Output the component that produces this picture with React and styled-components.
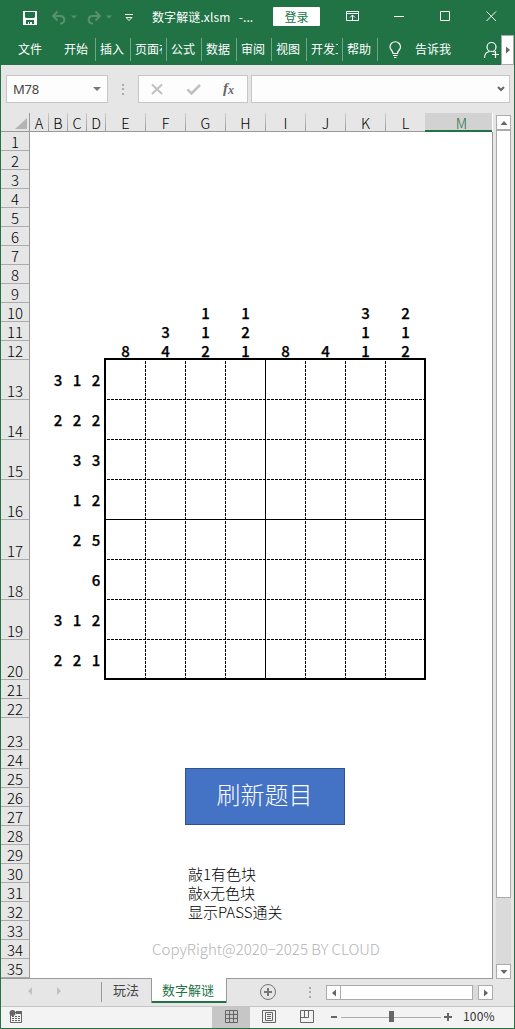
import React from 'react';
import styled, { createGlobalStyle, css } from 'styled-components';

const GREEN = '#217346';
const UI = '"Noto Sans CJK SC", sans-serif';

const GlobalStyle = createGlobalStyle`
  * { box-sizing: border-box; }
  body { margin: 0; background: #e6e6e6; }
`;

const Window = styled.div`
  width: 515px;
  height: 1029px;
  display: flex;
  flex-direction: column;
  overflow: hidden;
  background: #e6e6e6;
  border: solid ${GREEN};
  border-width: 0 1px 1px;
  font-family: ${UI};
  color: #262626;
`;

/* Title bar */
const TitleBar = styled.header`
  height: 33px;
  flex: none;
  display: flex;
  align-items: center;
  background: ${GREEN};
  color: #fff;
`;
const QuickAccess = styled.div`
  width: 151px;
  height: 33px;
  svg { display: block; }
`;
const Title = styled.div`
  width: 121px;
  font-size: 12px;
  line-height: 32px;
  white-space: pre;
  letter-spacing: 0.1px;
`;
const SignIn = styled.button`
  width: 47px;
  height: 19px;
  padding: 0;
  border: 0;
  border-radius: 1px;
  background: #fff;
  color: ${GREEN};
  font: 12px/18px ${UI};
`;
const WindowControls = styled.div`
  flex: 1;
  height: 33px;
  svg { display: block; }
`;

/* Ribbon tabs */
const Ribbon = styled.nav`
  height: 32px;
  flex: none;
  display: flex;
  align-items: flex-start;
  background: ${GREEN};
  color: #fff;
  font-size: 12px;
  line-height: 31px;
`;
const FileTab = styled.div`
  width: 59px;
  padding-left: 17px;
`;
const RibbonTab = styled.div`
  width: ${p => p.$w || 35}px;
  height: 23px;
  margin-top: 5px;
  padding-left: 4px;
  line-height: 21px;
  border-right: 1px solid #6fa687;
  display: flex;
`;
const TabLabel = styled.span`
  width: ${p => p.$w || 26}px;
  overflow: hidden;
  white-space: nowrap;
`;
const TellMe = styled.div`
  flex: 1;
  display: flex;
  svg { flex: none; margin: 8px 0 0 11px; }
  span { margin-left: 13px; }
`;
const ShareIcon = styled.svg`
  flex: none;
  margin-top: 7px;
`;
const RibbonScroll = styled.button`
  width: 13px;
  height: 30px;
  margin-top: 2px;
  padding: 0;
  border: 1px solid #ababab;
  background: #fff;
  display: grid;
  place-items: center;
`;

/* Formula bar */
const FormulaBar = styled.div`
  height: 48px;
  flex: none;
  display: flex;
  align-items: flex-start;
  padding: 10px 4px 0 5px;
`;
const FieldBox = styled.div`
  height: 28px;
  border: 1px solid #c6c6c6;
  background: #fdfdfd;
  display: flex;
  align-items: center;
`;
const NameBox = styled(FieldBox)`
  width: 102px;
  padding: 0 6px 0 6px;
  justify-content: space-between;
  font: 13px "Noto Sans", sans-serif;
  letter-spacing: -0.3px;
  color: #444;
`;
const Grip = styled.div`
  width: 2px;
  height: 11px;
  flex: none;
  margin: ${p => p.$m};
  background: repeating-linear-gradient(#ababab 0 2px, transparent 2px 4.4px);
`;
const FormulaButtons = styled(FieldBox)`
  width: 110px;
`;
const FormulaInput = styled(FieldBox)`
  flex: 1;
  margin-left: 3px;
  justify-content: flex-end;
  padding-right: 4px;
`;

/* Sheet */
const Body = styled.div`
  height: 866px;
  flex: none;
  display: flex;
`;
const Sheet = styled.main`
  width: 492px;
  height: 866px;
  display: grid;
  grid-template-columns: 29px repeat(4, 19px) repeat(8, 40px) 67px;
  grid-template-rows: repeat(13, 19px) repeat(8, 40px) repeat(2, 19px) 32px repeat(12, 19px);
  background: #fff;
  border-bottom: 1px solid #999;
  font-size: 15px;
  color: #000;
`;
const header = css`
  background: #e6e6e6;
  color: #000;
  font-weight: 300;
  display: flex;
  justify-content: center;
`;
const Corner = styled.div`
  grid-area: 1 / 1;
  background: #e6e6e6;
  border-right: 1px solid #999;
  border-bottom: 1px solid #999;
  svg { display: block; margin: 5px 0 0 14px; }
`;
const ColumnHeader = styled.div`
  ${header}
  grid-row: 1;
  grid-column: ${p => p.$col};
  line-height: 19px;
  font-size: 14.5px;
  border-bottom: 1px solid #999;
  border-right: 1px solid;
  border-image: linear-gradient(#d0d0d0, #999) 1;
  ${p => p.$active && css`
    margin: 0 1px 0 -1px;
    padding-left: 6px;
    background: #d2d2d2;
    color: ${GREEN};
    border-image: none;
    border-right: 0;
    border-bottom: 2px solid ${GREEN};
  `}
`;
const RowHeader = styled.div`
  ${header}
  grid-column: 1;
  grid-row: ${p => p.$row};
  align-items: flex-end;
  line-height: 17px;
  border-right: 1px solid #999;
  border-bottom: 1px solid #ababab;
`;
const EdgeLine = styled.div`
  grid-column: 14;
  grid-row: 2 / 37;
  border-right: 1px solid #999;
`;
const Clue = styled.div`
  grid-column: ${p => p.$col};
  grid-row: ${p => p.$row};
  display: flex;
  align-items: center;
  justify-content: center;
  padding-right: 1px;
  font-weight: 500;
  font-size: 15px;
  line-height: 18px;
  -webkit-text-stroke: 0.25px #000;
`;
const Board = styled.div`
  grid-column: 6 / 14;
  grid-row: 14 / 22;
  margin: -2px 0 0 -2px;
  border: 2px solid #000;
  display: grid;
  grid-template-columns: repeat(7, 40px) 38px;
  grid-template-rows: repeat(7, 40px) 38px;
`;
const solid = 'linear-gradient(#000, #000)';
const dashed = dir => `repeating-linear-gradient(${dir}, transparent 0 1px, #000 1px 4px)`;
const Square = styled.div`
  background-image:
    ${p => (p.$x === 7 ? 'none' : p.$x === 3 ? solid : dashed('to bottom'))},
    ${p => (p.$y === 7 ? 'none' : p.$y === 3 ? solid : dashed('to right'))};
  background-size: 1px 100%, 100% 1px;
  background-position: right top, left bottom;
  background-repeat: no-repeat;
`;
const RefreshButton = styled.button`
  grid-column: 8 / 12;
  grid-row: 26 / 29;
  margin: -1px 1px 1px -1px;
  padding: 0 1px 5px 0;
  border: 1px solid #2f528f;
  background: #4472c4;
  color: #fff;
  font: 300 24px/1 ${UI};
`;
const Note = styled.div`
  grid-column: 8 / 14;
  grid-row: ${p => p.$row};
  padding-left: 2px;
  font-weight: 300;
  font-size: 15px;
  line-height: 19px;
  white-space: nowrap;
`;
const Copyright = styled.div`
  grid-column: 6 / 14;
  grid-row: 35;
  text-align: center;
  font-weight: 300;
  font-size: 15px;
  line-height: 18px;
  color: #b4b4b4;
  white-space: nowrap;
`;

/* Scroll bars */
const VScroll = styled.div`
  width: 15px;
  height: 864px;
  margin: 2px 0 0 3px;
  display: flex;
  flex-direction: column;
  background: #dadada;
`;
const ScrollButton = styled.button`
  width: 15px;
  height: 15px;
  flex: none;
  padding: 0;
  border: 1px solid #ababab;
  background: #fff;
  display: grid;
  place-items: center;
`;
const VThumb = styled.div`
  height: 768px;
  border: 1px solid #ababab;
  background: #fff;
`;
const Spacer = styled.div`
  flex: 1;
`;
const HScroll = styled.div`
  width: 167px;
  height: 15px;
  margin-top: 6px;
  display: flex;
  background: #dadada;
`;
const HThumb = styled.div`
  width: 133px;
  border: 1px solid #ababab;
  margin-left: -1px;
  background: #fff;
`;

/* Sheet tabs */
const SheetTabs = styled.div`
  height: 28px;
  flex: none;
  display: flex;
  align-items: flex-start;
  border-bottom: 1px solid #c6c6c6;
  font-size: 13px;
`;
const TabNav = styled.svg`
  width: 100px;
  height: 27px;
  flex: none;
`;
const SheetTab = styled.div`
  width: 50px;
  height: 20px;
  margin-top: 3px;
  line-height: 16px;
  padding-left: 11px;
  border-left: 1px solid #999;
  color: #444;
`;
const ActiveTab = styled.div`
  width: 76px;
  height: 25px;
  margin-top: -1px;
  padding-left: 10px;
  line-height: 23px;
  background: #fff;
  border: solid #999;
  border-width: 0 1px;
  box-shadow: inset 0 -2px ${GREEN};
  color: ${GREEN};
`;
const AddTab = styled.svg`
  flex: none;
  margin: 4px 0 0 32px;
`;

/* Status bar */
const StatusBar = styled.footer`
  height: 21px;
  flex: none;
  display: flex;
  background: #f3f3f3;
`;
const RecordIcon = styled.svg`
  flex: none;
  margin: 2px 0 0 8px;
`;
const ViewButton = styled.div`
  width: 38px;
  height: 21px;
  padding-bottom: 2px;
  display: grid;
  place-items: center;
  background: ${p => (p.$active ? '#c6c6c6' : 'transparent')};
`;
const ZoomSlider = styled.svg`
  flex: none;
  margin-left: 5px;
`;
const ZoomValue = styled.div`
  width: 51px;
  margin-left: 6px;
  letter-spacing: 0.2px;
  font: 12px/18px ${UI};
  color: #333;
`;

const Triangle = ({ dir, size = 8, color = '#666' }) => {
  const points = {
    up: '0.5,6 4,2 7.5,6',
    down: '0.5,2 7.5,2 4,6',
    left: '6,0.5 6,7.5 2,4',
    right: '2,0.5 2,7.5 6,4',
  };
  return (
    <svg width={size} height={size} viewBox="0 0 8 8">
      <polygon points={points[dir]} fill={color} />
    </svg>
  );
};

const columns = 'ABCDEFGHIJKLM'.split('');
const rows = Array.from({ length: 35 }, (_, i) => i + 1);

const topClues = [[8], [3, 4], [1, 1, 2], [1, 2, 1], [8], [4], [3, 1, 1], [2, 1, 2]];
const leftClues = [[3, 1, 2], [2, 2, 2], [3, 3], [1, 2], [2, 5], [6], [3, 1, 2], [2, 2, 1]];

const ribbonTabs = [
  ['开始', 36],
  ['插入', 35],
  ['页面布', 36],
  ['公式', 35],
  ['数据', 35],
  ['审阅', 35],
  ['视图', 35],
  ['开发工', 36],
  ['帮助', 35],
];

export default function App() {
  return (
    <Window>
      <GlobalStyle />
      <TitleBar>
        <QuickAccess>
          <svg width="151" height="33" fill="none">
            <path d="M22 11h14v14H22z" fill="#fff" />
            <path d="M24 12h10v5l-1 1h-8l-1-1zM25 20h8v4h-8z" fill={GREEN} />
            <path d="M27 22h4v2h-4z" fill="#fff" />
            <path d="M28 22h1v2h-1z" fill={GREEN} />
            <g stroke="#579070" strokeWidth="2">
              <path d="M56.500 11.500l-4.500 4.500 4.500 4.500M52 16h8a4 3.800 0 0 1 0 7.500h-1" />
              <path d="M94.500 11.500l4.500 4.500-4.500 4.500M99 16h-8a4 3.800 0 0 0 0 7.500h1" />
            </g>
            <path d="M70 15.500h6l-3 3zM105 15.500h6l-3 3z" fill="#579070" />
            <path d="M124 14.500h8M125 17.500h6l-3 3z" stroke="#fff" />
          </svg>
        </QuickAccess>
        <Title>{'数字解谜.xlsm   -...'}</Title>
        <SignIn>登录</SignIn>
        <WindowControls>
          <svg width="194" height="33" fill="none" stroke="#fff">
            <path d="M26.500 11.500h12v9h-12zM26.500 13.500h12M32.500 20v-5M30 17.500l2.500-2.500 2.500 2.500" />
            <path d="M74 16.500h10M120.500 11.500h9v9h-9zM166.500 11.500l9.500 9.500M176 11.500l-9.500 9.500" />
          </svg>
        </WindowControls>
      </TitleBar>

      <Ribbon>
        <FileTab>文件</FileTab>
        {ribbonTabs.map(([label, w]) => (
          <RibbonTab key={label} $w={w}>
            <TabLabel $w={label.length > 2 ? 27 : 26}>{label}</TabLabel>
          </RibbonTab>
        ))}
        <TellMe>
          <svg width="13" height="20" viewBox="0 0 13 20" fill="none" stroke="#fff" strokeWidth="1.200">
            <path d="M4 12.500c0-3-3-3.500-3-6.500a5.200 5.200 0 0 1 10.500 0c0 3-3 3.500-3 6.500zM4 14.500h4.500M5 16.500h2.500" />
          </svg>
          <span>告诉我</span>
        </TellMe>
        <ShareIcon width="18" height="20" fill="none" stroke="#fff" strokeWidth="1.200">
          <circle cx="8.500" cy="7" r="4.500" />
          <path d="M1.500 18c0-4 2-6 5-6.500M10 11.200l1.500 1M12.500 11v7M9 14.500h7" />
        </ShareIcon>
        <RibbonScroll>
          <Triangle dir="right" size={8} />
        </RibbonScroll>
      </Ribbon>

      <FormulaBar>
        <NameBox>
          <span>M78</span>
          <svg width="8" height="4"><path d="M0 0h8L4 4z" fill="#777" /></svg>
        </NameBox>
        <Grip $m="9px 14px 0 14px" />
        <FormulaButtons>
          <svg width="108" height="26" fill="none" stroke="#c0c0c0" strokeWidth="2">
            <path d="M13 8.500l10 9.500M23 8.500l-10 9.500" />
            <path d="M48.500 13.500l4 4 8.500-8.500" strokeWidth="2.500" />
            <text x="84" y="17" fill="#666" stroke="none" fontFamily="Liberation Serif, serif" fontStyle="italic" fontWeight="700" fontSize="15">f</text>
            <text x="89" y="18" fill="#666" stroke="none" fontFamily="Liberation Serif, serif" fontStyle="italic" fontWeight="700" fontSize="12">x</text>
          </svg>
        </FormulaButtons>
        <FormulaInput>
          <svg width="8" height="6" fill="none" stroke="#666" strokeWidth="2"><path d="M1 1l3 3 3-3" /></svg>
        </FormulaInput>
      </FormulaBar>

      <Body>
        <Sheet>
          <Corner>
            <svg width="12" height="11"><path d="M12 0v11H0z" fill="#b4b4b4" /></svg>
          </Corner>
          {columns.map((c, i) => (
            <ColumnHeader key={c} $col={i + 2} $active={c === 'M'}>{c}</ColumnHeader>
          ))}
          {rows.map(r => (
            <RowHeader key={r} $row={r + 1}>{r}</RowHeader>
          ))}
          <EdgeLine />
          {topClues.map((list, x) =>
            list.map((n, i) => (
              <Clue key={`t${x}-${i}`} $col={6 + x} $row={14 - list.length + i}>{n}</Clue>
            ))
          )}
          {leftClues.map((list, y) =>
            list.map((n, i) => (
              <Clue key={`l${y}-${i}`} $col={6 - list.length + i} $row={14 + y}>{n}</Clue>
            ))
          )}
          <Board>
            {Array.from({ length: 64 }, (_, i) => (
              <Square key={i} $x={i % 8} $y={Math.floor(i / 8)} />
            ))}
          </Board>
          <RefreshButton>刷新题目</RefreshButton>
          <Note $row={31}>敲1有色块</Note>
          <Note $row={32}>敲x无色块</Note>
          <Note $row={33}>显示PASS通关</Note>
          <Copyright>CopyRight@2020−2025 BY CLOUD</Copyright>
        </Sheet>
        <VScroll>
          <ScrollButton><Triangle dir="up" /></ScrollButton>
          <VThumb />
          <Spacer />
          <ScrollButton><Triangle dir="down" /></ScrollButton>
        </VScroll>
      </Body>

      <SheetTabs>
        <TabNav><path d="M31 8v8l-4-4zM56 8v8l4-4z" fill="#c0c0c0" /></TabNav>
        <SheetTab>玩法</SheetTab>
        <ActiveTab>数字解谜</ActiveTab>
        <AddTab width="18" height="18" fill="none" stroke="#777">
          <circle cx="9" cy="9" r="7.500" />
          <path d="M5 9h8M9 5v8" strokeWidth="2" />
        </AddTab>
        <Grip $m="8px 15px 0 32px" />
        <HScroll>
          <ScrollButton><Triangle dir="left" /></ScrollButton>
          <HThumb />
          <Spacer />
          <ScrollButton><Triangle dir="right" /></ScrollButton>
        </HScroll>
      </SheetTabs>

      <StatusBar>
        <RecordIcon width="14" height="15" fill="none">
          <path d="M1.500 6v7.500h11V4M6 3.500h7" stroke="#666" />
          <path d="M7 2h6v3H7z" fill="#666" />
          <circle cx="3.500" cy="4" r="3" fill="#666" />
          <path d="M3 7.500h9M3 9.500h9M3 11.500h9" stroke="#666" strokeDasharray="2 1" />
        </RecordIcon>
        <Spacer />
        <ViewButton $active>
          <svg width="13" height="13" fill="none" stroke="#666"><path d="M.5.5h12v12H.5zM4.500 0v13M8.500 0v13M0 4.500h13M0 8.500h13" /></svg>
        </ViewButton>
        <ViewButton>
          <svg width="14" height="13" fill="none" stroke="#666"><path d="M.5.5h13v12H.5zM3.500 2.500h7v8h-7zM5 4.500h4M5 6.500h4M5 8.500h4" /></svg>
        </ViewButton>
        <ViewButton>
          <svg width="14" height="13" fill="none" stroke="#666"><path d="M.5.5h13v12H.5zM.5 7.500h8V.5M4.500.5v7" /></svg>
        </ViewButton>
        <ZoomSlider width="126" height="21">
          <path d="M10 10.500h100" stroke="#ababab" />
          <path d="M0 9h6v2H0zM113 9h8v2h-8zM116 6h2v8h-2zM58 4h5v11h-5z" fill="#666" />
        </ZoomSlider>
        <ZoomValue>100%</ZoomValue>
      </StatusBar>
    </Window>
  );
}
